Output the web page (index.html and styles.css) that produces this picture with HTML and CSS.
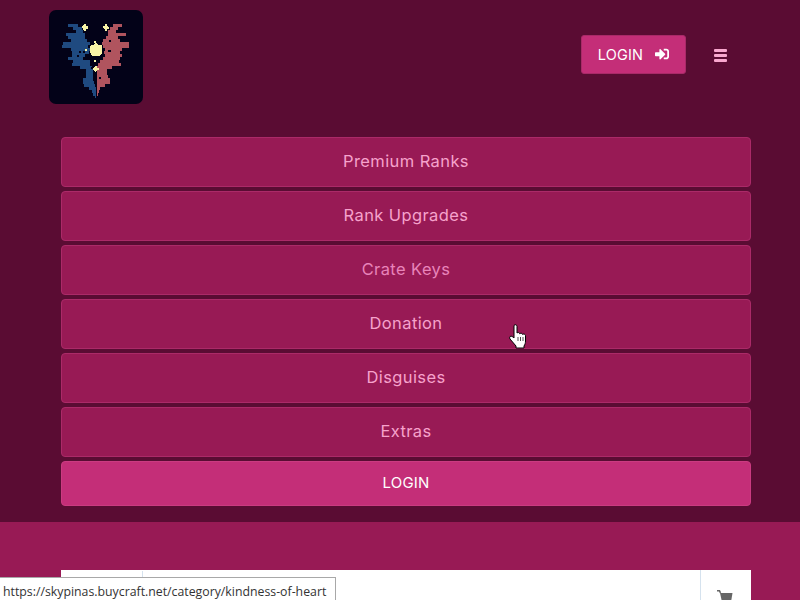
FILE: index.html
```html
<!DOCTYPE html>
<html lang="en">
<head>
<meta charset="utf-8">
<title>SkyPinas</title>
<link rel="stylesheet" href="styles.css">
</head>
<body>
<div class="top">
  <header class="header">
    <svg class="logo" viewBox="27 30 282 282" shape-rendering="crispEdges" aria-label="logo">
      <path class="blue" d="M83 72h32v9H83zM100 81h25v9h-25zM108 90h22v9h-22zM78 99h57v9H78zM85 108h50v9H85zM92 117h48v9H92zM68 126h82v9H68zM65 135h80v9H65zM92 144h58v9H92zM95 153h53v9H95zM95 162h40v9H95zM85 171h45v9H85zM100 180h50v9h-50zM95 189h55v9H95zM120 198h35v9h-35zM138 207h20v9h-20zM138 216h22v9h-22zM138 225h22v9h-22zM128 234h32v9h-32zM128 243h34v9h-34zM132 252h34v9h-34zM148 261h20v9h-20zM155 270h13v9h-13zM160 279h8v9h-8zM165 288h4v5h-4z"/>
      <path class="red" d="M220 72h26v9h-26zM210 81h25v9h-25zM205 90h23v9h-23zM205 99h53v9h-53zM198 108h37v9h-37zM190 117h50v9h-50zM186 126h80v9h-80zM190 135h76v9h-76zM195 144h50v9h-50zM192 153h48v9h-48zM195 162h50v9h-50zM190 171h50v9h-50zM180 180h58v9h-58zM175 189h68v9h-68zM172 198h43v9h-43zM172 207h28v9h-28zM172 216h28v9h-28zM172 225h33v9h-33zM172 234h38v9h-38zM172 243h38v9h-38zM172 252h23v9h-23zM172 261h8v9h-8zM170 270h8v9h-8zM170 279h5v9h-5zM170 288h2v5h-2z"/>
      <path class="gap" d="M118 153h6v6h-6zM130 153h5v6h-5zM112 165h6v5h-6zM206 120h8v6h-8zM205 150h8v6h-8zM160 225h4v18h-4zM178 230h6v6h-6zM152 200h6v8h-6z"/>
      <polygon class="star" points="165,130 172,130 175,134 186,136 186,160 177,168 158,168 150,158 150,138 160,134"/>
      <polygon class="star" points="132,72 138,72 139,78 145,80 145,85 138,87 137,92 131,92 130,86 125,84 125,79 130,78"/>
      <polygon class="star" points="195,72 201,72 201,78 206,80 206,86 201,87 201,92 195,92 194,87 190,85 190,79 194,78"/>
      <polygon class="star" points="164,198 170,198 171,203 177,205 177,210 170,212 169,216 164,216 163,211 158,210 158,204 163,203"/>
      <rect class="star" x="162" y="180" width="6" height="6"/>
      <rect class="star" x="135" y="147" width="6" height="6"/>
      <rect class="star" x="162" y="124" width="6" height="5"/>
    </svg>
    <div class="actions">
      <a class="login-btn">LOGIN
        <svg class="login-icon" viewBox="0 0 512 512"><path d="M416 448h-84c-6.600 0-12-5.400-12-12v-40c0-6.600 5.400-12 12-12h84c17.700 0 32-14.300 32-32V160c0-17.700-14.300-32-32-32h-84c-6.600 0-12-5.400-12-12V76c0-6.600 5.400-12 12-12h84c53 0 96 43 96 96v192c0 53-43 96-96 96zm-47-201L201 79c-15-15-41-4.500-41 17v96H24c-13.300 0-24 10.700-24 24v96c0 13.300 10.700 24 24 24h136v96c0 21.500 26 32 41 17l168-168c9.300-9.400 9.300-24.600 0-34z"/></svg>
      </a>
      <span class="burger"><i></i><i></i><i></i></span>
    </div>
  </header>
  <nav class="menu">
    <a class="item">Premium Ranks</a>
    <a class="item">Rank Upgrades</a>
    <a class="item dim">Crate Keys</a>
    <a class="item">Donation</a>
    <a class="item">Disguises</a>
    <a class="item">Extras</a>
    <a class="item-login">LOGIN</a>
  </nav>
</div>
<main class="lower">
  <div class="card">
    <div class="card-logo"></div>
    <div class="card-mid"></div>
    <div class="card-cart">
      <svg class="cart" viewBox="0 0 17 17"><path class="cart-h" d="M0 .8h2.500l1 2"/><path class="cart-b" d="M3 3h12.500l-1.500 9H5z"/></svg>
    </div>
  </div>
</main>
<div class="status">https://skypinas.buycraft.net/category/kindness-of-heart</div>
<svg class="hand" viewBox="0 0 18 25"><path d="M5 1.500c1-1.300 3-1 3 1V9c1-.8 2.500-.6 2.800.8.800-.9 2.400-.7 2.700.6.800-.6 3-.4 3 1.200v5.400c0 2-.5 3.500-1.500 5V24H7v-2L1 15c-.8-1.300-.3-2.800 1-2.800.8 0 2 .7 3 1.800z"/><path class="hand-line" d="M9 13v4M11.500 13v4M14 13v4"/></svg>
</body>
</html>
```
FILE: styles.css
```css
* { box-sizing: border-box; }
html, body { margin: 0; height: 100%; }
body {
  width: 800px;
  height: 600px;
  overflow: hidden;
  position: relative;
  background: #981a55;
  font-family: "Inter", "Open Sans", sans-serif;
}
.top {
  height: 522px;
  background: #5a0c33;
  padding: 10px 49px 0;
}
.header {
  display: flex;
  justify-content: space-between;
  align-items: flex-start;
  height: 127px;
}
.logo {
  width: 94px;
  height: 94px;
  background: #030218;
  border-radius: 7px;
}
.blue { fill: #1f4a80; }
.red { fill: #b0545e; }
.star { fill: #f8f4a6; }
.gap { fill: #030218; }
.actions {
  display: flex;
  align-items: center;
  gap: 28px;
  margin-top: 25px;
  padding-right: 24px;
}
.login-btn {
  display: flex;
  align-items: center;
  justify-content: center;
  gap: 12px;
  width: 105px;
  height: 39px;
  padding-bottom: 1px;
  background: #c42e78;
  border: 1px solid #a82a68;
  border-radius: 3px;
  color: #fff;
  font-size: 14.500px;
  letter-spacing: .2px;
}
.login-icon { width: 14px; height: 14px; fill: #fff; }
.burger {
  display: flex;
  flex-direction: column;
  gap: 2px;
  width: 13px;
  margin-top: 2px;
}
.burger i { display: block; height: 3px; background: #f9a8cf; border-radius: 1px; }
.menu {
  display: flex;
  flex-direction: column;
  gap: 4px;
  margin-left: 12px;
}
.item, .item-login {
  display: flex;
  align-items: center;
  justify-content: center;
  border-radius: 4px;
}
.item {
  height: 50px;
  padding-bottom: 3px;
  background: #981a55;
  border: 1px solid #ab2a68;
  color: #f6a2cc;
  font-size: 16.500px;
  letter-spacing: .4px;
}
.dim { color: #e884ba; }
.item-login {
  height: 45px;
  padding-bottom: 2px;
  background: #c42e78;
  border: 1px solid #cb3b81;
  color: #fff;
  font-size: 15px;
  letter-spacing: .2px;
}
.lower { padding: 48px 49px 0 61px; }
.card {
  display: flex;
  height: 60px;
  background: #fff;
}
.card-logo { width: 82px; border-right: 1px solid #d5e2ee; margin-top: 1px; }
.card-mid { flex: 1; }
.card-cart {
  width: 51px;
  border-left: 1px solid #d5e2ee;
  padding: 20px 0 0 16px;
}
.cart { display: block; width: 17px; height: 17px; fill: #666; }
.cart-h { fill: none; stroke: #666; stroke-width: 1.500; }
.status {
  position: absolute;
  left: 0;
  bottom: 0;
  width: 336px;
  height: 23px;
  padding: 6px 0 0 3px;
  background: #fff;
  border: 1px solid #a8a8a8;
  border-width: 1px 1px 0 0;
  color: #333;
  font: 12.300px/16px "Open Sans", sans-serif;
  white-space: nowrap;
  overflow: hidden;
}
.hand {
  position: absolute;
  left: 509px;
  top: 324px;
  width: 18px;
  height: 25px;
  fill: #fff;
  stroke: #000;
  stroke-width: 1;
}
.hand-line { fill: none; stroke-width: .7; }
```
